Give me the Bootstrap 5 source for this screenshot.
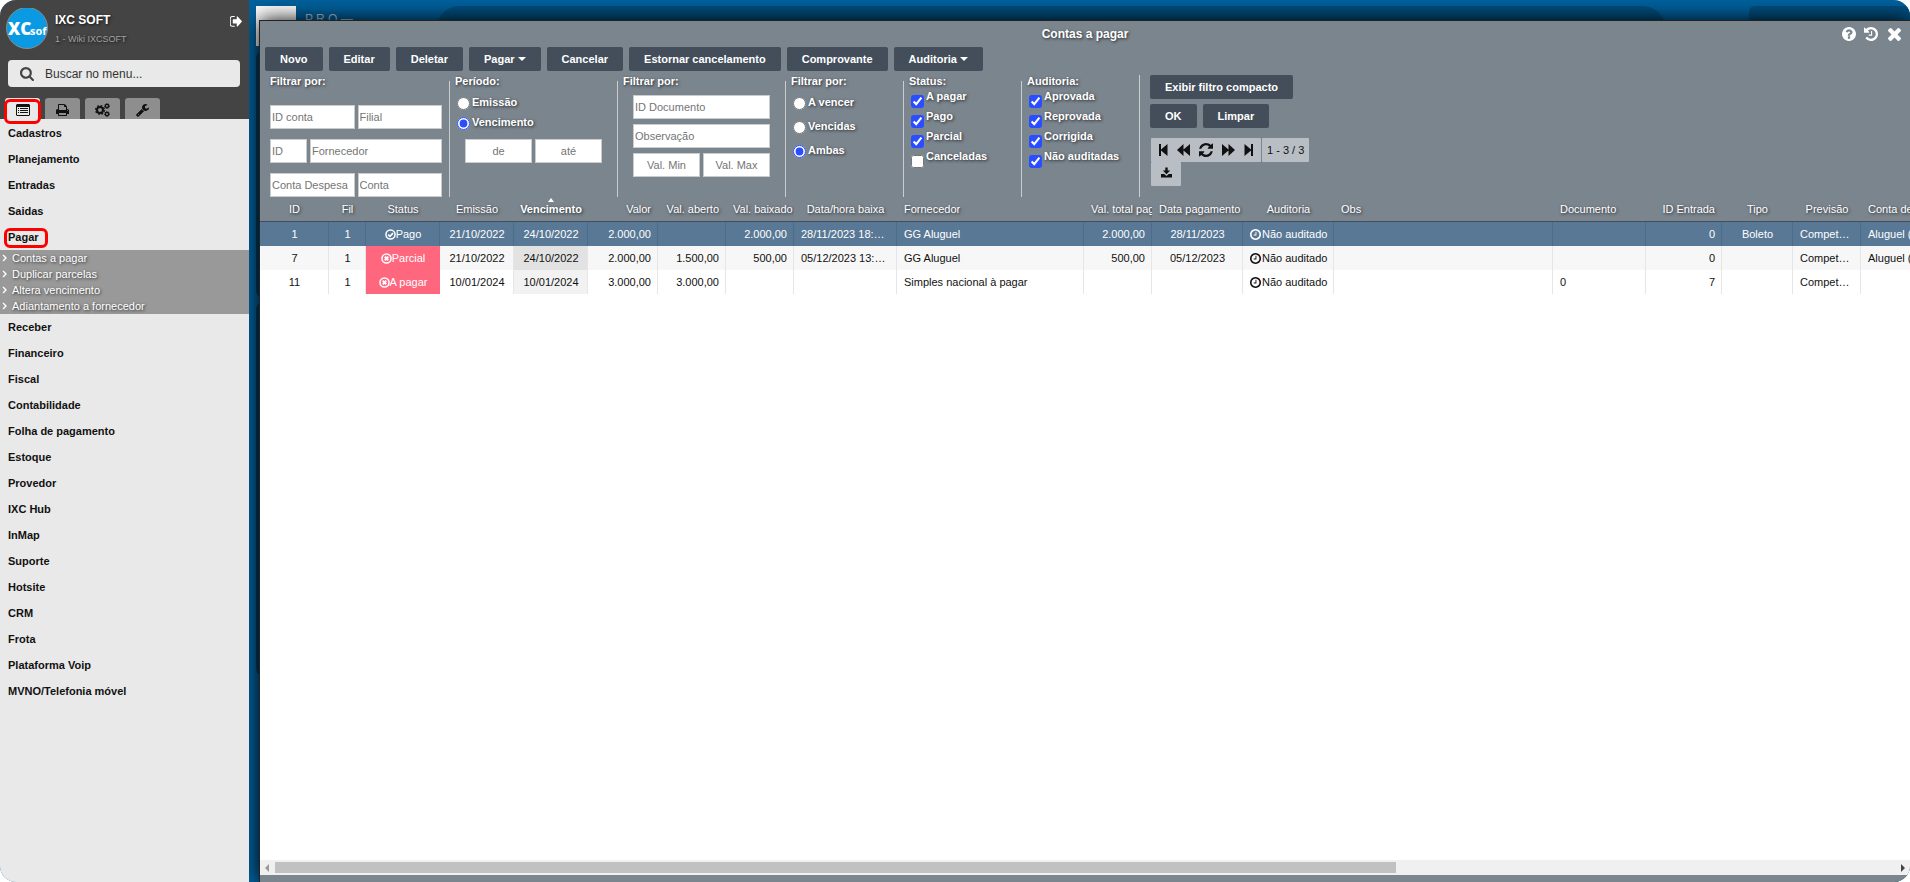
<!DOCTYPE html>
<html lang="pt-BR">
<head>
<meta charset="utf-8">
<meta name="viewport" content="width=device-width, initial-scale=1">
<title>Contas a pagar</title>
<link rel="stylesheet" href="https://cdn.jsdelivr.net/npm/bootstrap@5.3.0/dist/css/bootstrap.min.css">
<style>
  body { font: 11px/16px "Liberation Sans", Arial, sans-serif; color: #111; background: #fff; }
  .app { height: 100vh; border-radius: 16px; background: #00619d; }
  a { color: inherit; text-decoration: none; }
  svg { fill: currentColor; display: block; flex: none; }
  .shade { text-shadow: 1px 1px 3px rgba(0,0,0,.7); }

  /* sidebar */
  .side { width: 249px; background: #e9e9e9; }
  .side-head { background: #444; color: #fff; height: 119px; margin-bottom: 1px; }
  .side-user { padding: 8px 7px 0 6px; }
  .user-name { font-size: 12px; font-weight: bold; }
  .user-org { font-size: 9px; color: #a2a2a2; margin-top: 3px; }
  .menu-search { height: 27px; margin: 10px 9px 0 8px; padding: 0 12px; gap: 11px; background: #e9e9e9; border-radius: 4px; color: #444; }
  .menu-search input { border: 0; background: none; outline: 0; font-size: 12px; color: #333; min-width: 0; }
  .menu-search input::placeholder { color: #333; }
  .tabs-row { gap: 5px; margin-left: 5px; }
  .tab-btn { height: 21px; width: 35px; border: 0; border-radius: 3px 3px 0 0; background: #8e8e8e; color: #111; padding: 3px 0 0; }
  .tab-btn.on { background: #e9e9e9; }
  .hot { position: absolute; border: 3px solid #f00; border-radius: 6px; pointer-events: none; }
  .hot-tab { left: -1px; top: 1px; width: 37px; height: 25px; }
  .hot-item { left: 4px; top: 4px; width: 44px; height: 20px; }
  .menu-item > a { display: block; line-height: 26px; padding-left: 8px; font-weight: bold; color: #111; }
  .submenu { background: #999; color: #fff; }
  .submenu a { display: flex; align-items: center; gap: 5px; padding-left: 2px; height: 16px; }

  /* desktop behind the window */
  .desk { padding: 20px 0 0 10px; }
  .behind { position: absolute; background: #004e7f; }
  .b-logo { left: 7px; top: 6px; width: 40px; height: 40px; background: #fff; }
  .b-text { left: 56px; top: 11px; background: none; color: #b9c6d0; font-size: 12px; }
  .b-search { left: 188px; right: 245px; top: 6px; height: 44px; border-radius: 22px; }
  .b-user { left: 1500px; right: 0; top: 6px; height: 44px; border-radius: 6px; }
  .b-card { left: 7px; top: 52px; width: 40px; height: 245px; border-radius: 6px; background: #003f66; }
  .b-card2 { left: 7px; top: 303px; width: 40px; height: 372px; border-radius: 6px; background: #003f66; }

  /* window */
  .win { position: relative; background: #7b858e; border: solid #222; border-width: 1px 0 0 1px; box-shadow: 0 0 20px #000; }
  .win-title { height: 26px; color: #fff; font-size: 12px; font-weight: bold; line-height: 26px; }
  .win-tools { position: absolute; right: 9px; top: 6px; color: #fff; }
  .icon-btn { border: 0; background: none; padding: 0; color: inherit; }
  .btn-ixc { --bs-btn-color: #fff; --bs-btn-bg: #434e5a; --bs-btn-hover-color: #fff; --bs-btn-hover-bg: #36404b;
    --bs-btn-padding-x: 15px; --bs-btn-padding-y: 0px; --bs-btn-font-size: 11px; --bs-btn-font-weight: 700;
    --bs-btn-border-radius: 2px; --bs-btn-border-width: 0px; --bs-btn-line-height: 24px; font-family: inherit; height: 24px; }
  .btn-ixc.dropdown-toggle { line-height: 22px; }
  .btn-ixc.dropdown-toggle::after { margin-left: 3px; border-width: 4px 4px 0; border-left-color: transparent; border-right-color: transparent; vertical-align: 2px; }
  .btn-row { gap: 6px; padding: 0 5px 4px; }

  .filters { height: 122px; color: #fff; font-weight: bold; }
  .fgroup { border-left: 1px solid #c9cdd1; padding-left: 5px; width: 118px; flex: none; }
  .fgroup.wide { width: 168px; }
  .fgroup.first { width: 185px; border: 0; padding-left: 6px; }
  .fgroup.acts { width: auto; padding-left: 10px; }
  .fgroup legend { float: none; font-size: 11px; font-weight: bold; line-height: 12px; margin: 0; width: auto; }
  .fgroup input[type=text] { height: 24px; border: 1px solid #ccc; border-radius: 0; padding: 0 1px; font-size: 11px; color: #222; line-height: 20px; min-width: 0; }
  .fgroup input::placeholder { color: #757575; }
  .fgroup input[type=radio], .fgroup input[type=checkbox] { width: 13px; height: 13px; margin: 0; accent-color: #2a4dff; flex: none; }
  .pair { display: flex; gap: 3px; }
  .pair .short { width: 37px; flex: none; }
  .f172 { width: 172px; margin-top: 18px; gap: 10px; }
  .f137 { width: 137px; margin-left: 10px; }
  .opt { display: flex; align-items: center; gap: 2px; padding-left: 2px; height: 20px; line-height: 18px; }
  .opt.tall { height: 24px; }
  .opt label { margin-bottom: 2px; }
  .opt.tick { align-items: flex-start; }
  .opt.tick input { margin-top: 8px; }
  .pager { color: #111; font-weight: normal; margin-left: 1px; }
  .pager-box { background: #b9bec4; height: 24px; border-radius: 1px; }
  .pager-nav { gap: 9px; padding: 0 8px; }

  /* grid */
  .grid { table-layout: fixed; width: 2400px; border-collapse: separate; border-spacing: 0; }
  .grid th, .grid td { overflow: hidden; white-space: nowrap; padding: 0 6px 0 7px; text-align: left; }
  .grid th { height: 25px; line-height: 24px; background: #7b858e; color: #fff; font-weight: normal; border-bottom: 1px solid #434e5a; padding-right: 7px; position: relative; }
  .grid td { height: 24px; line-height: 24px; text-overflow: ellipsis; border-right: 1px solid #e6e6e6; }
  .grid .c { text-align: center; }
  .grid .r { text-align: right; }
  .grid .tight { padding-right: 0; }
  .grid th.sorted { padding: 0; font-weight: bold; }
  .sorted::before { content: ""; position: absolute; left: 50%; top: 1px; margin-left: -3px; border: solid transparent; border-width: 0 3px 4px; border-bottom-color: #fff; }
  .grid .alt td { background: #f7f7f7; }
  .grid .alt td.key { background: #e2e2e2; }
  .grid td.key { background: #f2f2f2; }
  .grid .sel td, .grid .sel td.key { background: #587895; color: #fff; border-color: #4b6c8b; }
  .grid .owed td.st { background: #ff677f; color: #fff; border-color: #ff677f; }
  .grid td svg { display: inline-block; vertical-align: -2px; }
  .grid td.tight svg { margin-right: 1px; }
  .sbar { height: 15px; background: #f0f0f0; }
  .sbar-l { fill: #999; }
  .sbar-r { fill: #444; }
  .sthumb { width: 69%; height: 11px; background: #c1c1c1; }
  .win-foot { height: 7px; }
</style>
</head>
<body>
<svg width="0" height="0" class="position-absolute" aria-hidden="true">
  <symbol id="i-ok" viewBox="0 0 16 16"><circle cx="8" cy="8" r="6.6" fill="none" stroke="currentColor" stroke-width="2.2"/><path d="M4.600 8.200l2.600 2.500 4.400-4.600" fill="none" stroke="currentColor" stroke-width="2.400"/></symbol>
  <symbol id="i-no" viewBox="0 0 16 16"><circle cx="8" cy="8" r="6.600" fill="none" stroke="currentColor" stroke-width="2.200"/><path d="M5.500 5.500l5 5M10.500 5.500l-5 5" fill="none" stroke="currentColor" stroke-width="2.800"/></symbol>
  <symbol id="i-clock" viewBox="128 128 1536 1536"><path d="M1024 544v448q0 14-9 23t-23 9h-320q-14 0-23-9t-9-23v-64q0-14 9-23t23-9h224v-352q0-14 9-23t23-9h64q14 0 23 9t9 23zm416 352q0-148-73-273t-198-198-273-73-273 73-198 198-73 273 73 273 198 198 273 73 273-73 198-198 73-273zm224 0q0 209-103 385.500t-279.500 279.500-385.500 103-385.500-103-279.500-279.500-103-385.500 103-385.500 279.500-279.500 385.500-103 385.500 103 279.500 279.500 103 385.500z"/></symbol>
  <symbol id="i-gt" viewBox="0 0 5 8"><path d="M1 1l3 3-3 3" fill="none" stroke="currentColor" stroke-width="1.400"/></symbol>
</svg>

<div class="app d-flex overflow-hidden">
  <aside class="side flex-shrink-0">
    <header class="side-head d-flex flex-column">
      <div class="side-user d-flex">
        <svg width="42" height="42" viewBox="0 0 42 42" role="img" aria-label="IXC Soft"><defs><clipPath id="lc"><circle cx="21" cy="20" r="20"/></clipPath></defs><circle cx="21" cy="20" r="20.500" fill="#0a9ae4" stroke="#8a8a8a"/><g clip-path="url(#lc)" fill="#fff" font-family="Open Sans, sans-serif"><text x="2" y="27" font-size="17" font-weight="800">XC</text><text x="24" y="27" font-size="11" font-weight="700">soft</text></g></svg>
        <div class="flex-grow-1 shade" style="padding-left:7px">
          <div class="user-name mt-1">IXC SOFT</div>
          <div class="user-org">1 - Wiki IXCSOFT</div>
        </div>
        <button class="icon-btn align-self-start mt-2" aria-label="Sair"><svg width="12" height="11" viewBox="90 256 1550 1300" preserveAspectRatio="none"><path d="M704 1440q0 4 1 20t.5 26.500-3 23.500-10 19.500-20.500 6.500h-320q-119 0-203.500-84.500t-84.500-203.500v-704q0-119 84.500-203.500t203.500-84.500h320q13 0 22.500 9.500t9.500 22.500q0 4 1 20t.5 26.500-3 23.500-10 19.500-20.500 6.500h-320q-66 0-113 47t-47 113v704q0 66 47 113t113 47h312l11.500 1 11.500 3 8 5.500 7 9 2 13.500zm928-544q0 26-19 45l-544 544q-19 19-45 19t-45-19-19-45v-288h-448q-26 0-45-19t-19-45v-384q0-26 19-45t45-19h448v-288q0-26 19-45t45-19 45 19l544 544q19 19 19 45z"/></svg></button>
      </div>
      <div class="menu-search d-flex align-items-center">
        <svg width="14" height="14" viewBox="64 128 1664 1664"><path d="M1216 832q0-185-131.500-316.500t-316.500-131.500-316.500 131.500-131.500 316.500 131.500 316.500 316.500 131.500 316.500-131.500 131.500-316.500zm512 832q0 52-38 90t-90 38q-54 0-90-38l-343-342q-179 124-399 124-143 0-273.500-55.500t-225-150-150-225-55.500-273.500 55.500-273.500 150-225 225-150 273.500-55.500 273.500 55.500 225 150 150 225 55.500 273.500q0 220-124 399l343 343q37 37 37 90z"/></svg>
        <input class="flex-grow-1 p-0" type="text" placeholder="Buscar no menu..." aria-label="Buscar no menu">
      </div>
      <div class="tabs-row d-flex mt-auto position-relative">
        <button class="tab-btn on d-flex justify-content-center align-items-center" aria-label="Menu"><svg width="14" height="12" viewBox="0 0 14 12"><path fill-rule="evenodd" d="M1 0h12l1 1v10l-1 1H1l-1-1V1zM1 3v8h12V3zM2 4h1v1H2zM4 4h8v1H4zM2 6h1v1H2zM4 6h8v1H4zM2 8h1v1H2zM4 8h8v1H4z"/></svg></button>
        <button class="tab-btn d-flex justify-content-center align-items-center" aria-label="Relatórios"><svg width="13" height="12" viewBox="64 128 1664 1536"><path d="M448 1536h896v-256h-896v256zm0-640h896v-384h-160q-40 0-68-28t-28-68v-160h-640v640zm1152 64q0-26-19-45t-45-19-45 19-19 45 19 45 45 19 45-19 19-45zm128 0v416q0 13-9.500 22.500t-22.500 9.500h-224v160q0 40-28 68t-68 28h-960q-40 0-68-28t-28-68v-160h-224q-13 0-22.500-9.500t-9.500-22.500v-416q0-79 56.500-135.500t135.500-56.500h64v-544q0-40 28-68t68-28h672q40 0 88 20t76 48l152 152q28 28 48 76t20 88v256h64q79 0 135.500 56.500t56.500 135.500z"/></svg></button>
        <button class="tab-btn d-flex justify-content-center align-items-center" aria-label="Configurações"><svg width="15" height="14" viewBox="0 0 15 14"><g fill="none" stroke="currentColor"><circle cx="5" cy="7" r="3" stroke-width="2"/><circle cx="5" cy="7" r="4.400" stroke-width="1.300" stroke-dasharray="1.800 1.655"/><circle cx="12" cy="3" r="1.600" stroke-width="1.300"/><circle cx="12" cy="3" r="2.400" stroke-width="1" stroke-dasharray="1.100 .785"/><circle cx="12" cy="11" r="1.600" stroke-width="1.300"/><circle cx="12" cy="11" r="2.400" stroke-width="1" stroke-dasharray="1.100 .785"/></g></svg></button>
        <button class="tab-btn d-flex justify-content-center align-items-center" aria-label="Ferramentas"><svg width="13" height="13" viewBox="64 128 1664 1664"><path d="M448 1472q0-26-19-45t-45-19-45 19-19 45 19 45 45 19 45-19 19-45zm644-420l-682 682q-37 37-90 37-52 0-91-37l-106-108q-38-36-38-90 0-53 38-91l681-681q39 98 114.500 173.500t173.500 114.500zm634-435q0 39-23 106-47 134-164.500 217.500t-258.500 83.500q-185 0-316.500-131.500t-131.500-316.500 131.500-316.500 316.500-131.500q58 0 121.500 16.500t107.500 46.500q16 11 16 28t-16 28l-293 169v224l193 107q5-3 79-48.500t135.500-81 70.500-35.500q15 0 23.500 10t8.500 25z"/></svg></button>
        <span class="hot hot-tab"></span>
      </div>
    </header>
    <nav>
      <div class="menu-item"><a href="#">Cadastros</a></div>
      <div class="menu-item"><a href="#">Planejamento</a></div>
      <div class="menu-item"><a href="#">Entradas</a></div>
      <div class="menu-item"><a href="#">Saidas</a></div>
      <div class="menu-item position-relative"><a href="#">Pagar</a><span class="hot hot-item"></span></div>
      <div class="submenu shade">
        <a href="#"><svg width="5" height="8"><use href="#i-gt"/></svg>Contas a pagar</a>
        <a href="#"><svg width="5" height="8"><use href="#i-gt"/></svg>Duplicar parcelas</a>
        <a href="#"><svg width="5" height="8"><use href="#i-gt"/></svg>Altera vencimento</a>
        <a href="#"><svg width="5" height="8"><use href="#i-gt"/></svg>Adiantamento a fornecedor</a>
      </div>
      <div class="menu-item"><a href="#">Receber</a></div>
      <div class="menu-item"><a href="#">Financeiro</a></div>
      <div class="menu-item"><a href="#">Fiscal</a></div>
      <div class="menu-item"><a href="#">Contabilidade</a></div>
      <div class="menu-item"><a href="#">Folha de pagamento</a></div>
      <div class="menu-item"><a href="#">Estoque</a></div>
      <div class="menu-item"><a href="#">Provedor</a></div>
      <div class="menu-item"><a href="#">IXC Hub</a></div>
      <div class="menu-item"><a href="#">InMap</a></div>
      <div class="menu-item"><a href="#">Suporte</a></div>
      <div class="menu-item"><a href="#">Hotsite</a></div>
      <div class="menu-item"><a href="#">CRM</a></div>
      <div class="menu-item"><a href="#">Frota</a></div>
      <div class="menu-item"><a href="#">Plataforma Voip</a></div>
      <div class="menu-item"><a href="#">MVNO/Telefonia móvel</a></div>
    </nav>
  </aside>

  <main class="desk flex-grow-1 position-relative overflow-hidden d-flex flex-column">
    <div class="behind b-logo"></div><div class="behind b-text">P R O —</div>
    <div class="behind b-search"></div><div class="behind b-user"></div>
    <div class="behind b-card"></div><div class="behind b-card2"></div>

    <section class="win flex-grow-1 d-flex flex-column">
      <h1 class="win-title shade text-center m-0">Contas a pagar</h1>
      <div class="win-tools d-flex gap-2 align-items-center">
        <button class="icon-btn" aria-label="Ajuda"><svg width="14" height="14" viewBox="128 128 1536 1536"><path d="M1024 1376v-192q0-14-9-23t-23-9h-192q-14 0-23 9t-9 23v192q0 14 9 23t23 9h192q14 0 23-9t9-23zm256-672q0-88-55.500-163t-138.500-116-170-41q-243 0-371 213-15 24 8 42l132 100q7 6 19 6 16 0 25-12 53-68 86-92 34-24 86-24 48 0 85.500 26t37.500 59q0 38-20 61t-68 45q-63 28-115.500 86.500t-52.500 125.500v36q0 14 9 23t23 9h192q14 0 23-9t9-23q0-19 21.500-49.500t54.500-49.500q32-18 49-28.500t46-35 44.500-48 28-60.500 12.500-81zm384 192q0 209-103 385.500t-279.500 279.500-385.500 103-385.500-103-279.500-279.500-103-385.500 103-385.500 279.500-279.500 385.500-103 385.500 103 279.500 279.500 103 385.500z"/></svg></button>
        <button class="icon-btn" aria-label="Histórico"><svg width="14" height="14" viewBox="128 128 1536 1536"><path d="M1664 896q0 156-61 298t-164 245-245 164-298 61q-172 0-327-72.500t-264-204.500q-7-10-6.500-22.500t8.500-20.500l137-138q10-9 25-9 16 2 23 12 73 95 179 147t225 52q104 0 198.500-40.500t163.500-109.500 109.500-163.500 40.500-198.500-40.500-198.500-109.500-163.500-163.500-109.500-198.500-40.500q-98 0-188 35.500t-160 101.500l137 138q31 30 14 69-17 40-59 40h-448q-26 0-45-19t-19-45v-448q0-42 40-59 39-17 69 14l130 129q107-101 244.500-156.500t284.500-55.500q156 0 298 61t245 164 164 245 61 298zm-640-288v448q0 14-9 23t-23 9h-320q-14 0-23-9t-9-23v-64q0-14 9-23t23-9h224v-352q0-14 9-23t23-9h64q14 0 23 9t9 23z"/></svg></button>
        <button class="icon-btn" style="padding-left:2px" aria-label="Fechar"><svg width="13" height="13" viewBox="302 302 1188 1188"><path d="M1490 1322q0 40-28 68l-136 136q-28 28-68 28t-68-28l-294-294-294 294q-28 28-68 28t-68-28l-136-136q-28-28-28-68t28-68l294-294-294-294q-28-28-28-68t28-68l136-136q28-28 68-28t68 28l294 294 294-294q28-28 68-28t68 28l136 136q28 28 28 68t-28 68l-294 294 294 294q28 28 28 68z" transform="translate(0 -64)"/></svg></button>
      </div>

      <div class="btn-row d-flex">
        <button class="btn btn-ixc">Novo</button>
        <button class="btn btn-ixc">Editar</button>
        <button class="btn btn-ixc">Deletar</button>
        <button class="btn btn-ixc dropdown-toggle" data-bs-toggle="dropdown">Pagar</button>
        <button class="btn btn-ixc">Cancelar</button>
        <button class="btn btn-ixc">Estornar cancelamento</button>
        <button class="btn btn-ixc">Comprovante</button>
        <button class="btn btn-ixc dropdown-toggle" data-bs-toggle="dropdown">Auditoria</button>
      </div>

      <form class="filters d-flex ps-1">
        <fieldset class="fgroup first">
          <legend class="shade">Filtrar por:</legend>
          <div class="f172 d-flex flex-column">
            <div class="pair"><input type="text" class="w-50" placeholder="ID conta" aria-label="ID conta"><input type="text" class="w-50" placeholder="Filial" aria-label="Filial"></div>
            <div class="pair"><input type="text" class="short" placeholder="ID" aria-label="ID"><input type="text" class="flex-grow-1" placeholder="Fornecedor" aria-label="Fornecedor"></div>
            <div class="pair"><input type="text" class="w-50" placeholder="Conta Despesa" aria-label="Conta Despesa"><input type="text" class="w-50" placeholder="Conta" aria-label="Conta"></div>
          </div>
        </fieldset>
        <fieldset class="fgroup wide">
          <legend class="shade">Período:</legend>
          <div class="shade" style="padding:6px 0">
            <div class="opt"><input type="radio" name="per" id="p1"><label for="p1">Emissão</label></div>
            <div class="opt"><input type="radio" name="per" id="p2" checked><label for="p2">Vencimento</label></div>
          </div>
          <div class="f137 pair"><input type="text" class="w-50 text-center" placeholder="de" aria-label="de"><input type="text" class="w-50 text-center" placeholder="até" aria-label="até"></div>
        </fieldset>
        <fieldset class="fgroup wide">
          <legend class="shade">Filtrar por:</legend>
          <div class="f137 d-flex flex-column mt-2" style="gap:5px">
            <input type="text" placeholder="ID Documento" aria-label="ID Documento">
            <input type="text" placeholder="Observação" aria-label="Observação">
            <div class="pair"><input type="text" class="w-50 text-center" placeholder="Val. Min" aria-label="Val. Min"><input type="text" class="w-50 text-center" placeholder="Val. Max" aria-label="Val. Max"></div>
          </div>
        </fieldset>
        <fieldset class="fgroup">
          <legend class="shade">Filtrar por:</legend>
          <div class="shade mt-1">
            <div class="opt tall"><input type="radio" name="sit" id="s1"><label for="s1">A vencer</label></div>
            <div class="opt tall"><input type="radio" name="sit" id="s2"><label for="s2">Vencidas</label></div>
            <div class="opt tall"><input type="radio" name="sit" id="s3" checked><label for="s3">Ambas</label></div>
          </div>
        </fieldset>
        <fieldset class="fgroup">
          <legend class="shade">Status:</legend>
          <div class="shade">
            <div class="opt tick"><input type="checkbox" id="t1" checked><label for="t1">A pagar</label></div>
            <div class="opt tick"><input type="checkbox" id="t2" checked><label for="t2">Pago</label></div>
            <div class="opt tick"><input type="checkbox" id="t3" checked><label for="t3">Parcial</label></div>
            <div class="opt tick"><input type="checkbox" id="t4"><label for="t4">Canceladas</label></div>
          </div>
        </fieldset>
        <fieldset class="fgroup">
          <legend class="shade">Auditoria:</legend>
          <div class="shade">
            <div class="opt tick"><input type="checkbox" id="a1" checked><label for="a1">Aprovada</label></div>
            <div class="opt tick"><input type="checkbox" id="a2" checked><label for="a2">Reprovada</label></div>
            <div class="opt tick"><input type="checkbox" id="a3" checked><label for="a3">Corrigida</label></div>
            <div class="opt tick"><input type="checkbox" id="a4" checked><label for="a4">Não auditadas</label></div>
          </div>
        </fieldset>
        <div class="fgroup acts">
          <button type="button" class="btn btn-ixc d-block">Exibir filtro compacto</button>
          <div class="d-flex" style="gap:6px;padding:5px 0 10px"><button type="button" class="btn btn-ixc">OK</button><button type="button" class="btn btn-ixc">Limpar</button></div>
          <div class="pager">
            <div class="d-flex" style="gap:1px">
              <div class="pager-box pager-nav d-flex align-items-center">
                <button type="button" class="icon-btn" aria-label="Primeira"><svg width="9" height="12" viewBox="0 0 9 12"><path d="M0 0h2v5.500L8.500 0v12L2 6.500V12H0z"/></svg></button>
                <button type="button" class="icon-btn" aria-label="Anterior"><svg width="13" height="12" viewBox="0 0 13 12"><path d="M6.500 0v5.500L13 0v12L6.500 6.500V12L0 6z"/></svg></button>
                <button type="button" class="icon-btn" aria-label="Atualizar"><svg width="14" height="14" viewBox="128 128 1536 1536"><path d="M1639 1056q0 5-1 7-64 268-268 434.500t-478 166.500q-146 0-282.500-55t-243.500-157l-129 129q-19 19-45 19t-45-19-19-45v-448q0-26 19-45t45-19h448q26 0 45 19t19 45-19 45l-137 137q71 66 161 102t187 36q134 0 250-65t186-179q11-17 53-117 8-23 30-23h192q13 0 22.500 9.500t9.500 22.500zm25-800v448q0 26-19 45t-45 19h-448q-26 0-45-19t-19-45 19-45l138-138q-148-137-349-137-134 0-250 65t-186 179q-11 17-53 117-8 23-30 23h-199q-13 0-22.500-9.500t-9.500-22.500v-7q65-268 270-434.500t480-166.500q146 0 284 55.500t245 156.500l130-129q19-19 45-19t45 19 19 45z"/></svg></button>
                <button type="button" class="icon-btn" aria-label="Próxima"><svg width="13" height="12" viewBox="0 0 13 12"><path d="M6.500 0v5.500L0 0v12l6.500-5.500V12L13 6z"/></svg></button>
                <button type="button" class="icon-btn" aria-label="Última"><svg width="9" height="12" viewBox="0 0 9 12"><path d="M9 0H7v5.500L.5 0v12L7 6.500V12h2z"/></svg></button>
              </div>
              <div class="pager-box d-flex align-items-center" style="padding:0 5px">1 - 3 / 3</div>
            </div>
            <button type="button" class="icon-btn pager-box d-flex align-items-center justify-content-center" style="width:30px;padding-bottom:4px" aria-label="Exportar"><svg width="11" height="11" viewBox="0 0 12 11"><path d="M4.700 0h2.600v3.400H10L6 7.400 2 3.400h2.700zM0 7h3.600L6 9.200 8.400 7H12v4H0z"/></svg></button>
          </div>
        </div>
      </form>

      <div class="flex-grow-1 bg-white overflow-hidden" style="min-height:0">
        <table class="grid">
          <colgroup>
            <col style="width:69px"><col style="width:37px"><col style="width:74px"><col style="width:74px"><col style="width:74px"><col style="width:70px"><col style="width:68px"><col style="width:68px"><col style="width:103px"><col style="width:187px"><col style="width:68px"><col style="width:91px"><col style="width:91px"><col style="width:219px"><col style="width:93px"><col style="width:76px"><col style="width:71px"><col style="width:68px"><col>
          </colgroup>
          <thead class="shade"><tr>
            <th class="c">ID</th><th class="c">Fil</th><th class="c">Status</th><th class="c">Emissão</th><th class="c sorted">Vencimento</th><th class="r">Valor</th><th class="r">Val. aberto</th><th class="tight">Val. baixado</th><th class="c">Data/hora baixa</th><th>Fornecedor</th><th class="tight">Val. total pago</th><th class="tight">Data pagamento</th><th class="c">Auditoria</th><th>Obs</th><th>Documento</th><th class="r">ID Entrada</th><th class="c">Tipo</th><th class="c">Previsão</th><th>Conta de despesa</th>
          </tr></thead>
          <tbody>
            <tr class="sel"><td class="c">1</td><td class="c">1</td><td class="c"><svg width="11" height="11"><use href="#i-ok"/></svg>Pago</td><td class="c">21/10/2022</td><td class="c key">24/10/2022</td><td class="r">2.000,00</td><td class="r"></td><td class="r">2.000,00</td><td class="c">28/11/2023 18:02:41</td><td>GG Aluguel</td><td class="r">2.000,00</td><td class="c">28/11/2023</td><td class="tight"><svg width="11" height="11"><use href="#i-clock"/></svg>Não auditado</td><td></td><td></td><td class="r">0</td><td class="c">Boleto</td><td class="c">Competência</td><td>Aluguel (despesa)</td></tr>
            <tr class="alt owed"><td class="c">7</td><td class="c">1</td><td class="c st"><svg width="11" height="11"><use href="#i-no"/></svg>Parcial</td><td class="c">21/10/2022</td><td class="c key">24/10/2022</td><td class="r">2.000,00</td><td class="r">1.500,00</td><td class="r">500,00</td><td class="c">05/12/2023 13:02:41</td><td>GG Aluguel</td><td class="r">500,00</td><td class="c">05/12/2023</td><td class="tight"><svg width="11" height="11"><use href="#i-clock"/></svg>Não auditado</td><td></td><td></td><td class="r">0</td><td></td><td class="c">Competência</td><td>Aluguel (despesa)</td></tr>
            <tr class="owed"><td class="c">11</td><td class="c">1</td><td class="c st"><svg width="11" height="11"><use href="#i-no"/></svg>A pagar</td><td class="c">10/01/2024</td><td class="c key">10/01/2024</td><td class="r">3.000,00</td><td class="r">3.000,00</td><td></td><td></td><td>Simples nacional à pagar</td><td></td><td></td><td class="tight"><svg width="11" height="11"><use href="#i-clock"/></svg>Não auditado</td><td></td><td>0</td><td class="r">7</td><td></td><td class="c">Competência</td><td></td></tr>
          </tbody>
        </table>
      </div>
      <div class="sbar d-flex align-items-center justify-content-between px-1">
        <svg class="sbar-l" width="7" height="8" viewBox="0 0 7 8"><path d="M5 0v8L1 4z"/></svg>
        <div class="flex-grow-1 ms-1"><div class="sthumb"></div></div>
        <svg class="sbar-r" width="7" height="8" viewBox="0 0 7 8"><path d="M2 0v8l4-4z"/></svg>
      </div>
      <div class="win-foot"></div>
    </section>
  </main>
</div>
<script src="https://cdn.jsdelivr.net/npm/bootstrap@5.3.0/dist/js/bootstrap.bundle.min.js"></script>
</body>
</html>
